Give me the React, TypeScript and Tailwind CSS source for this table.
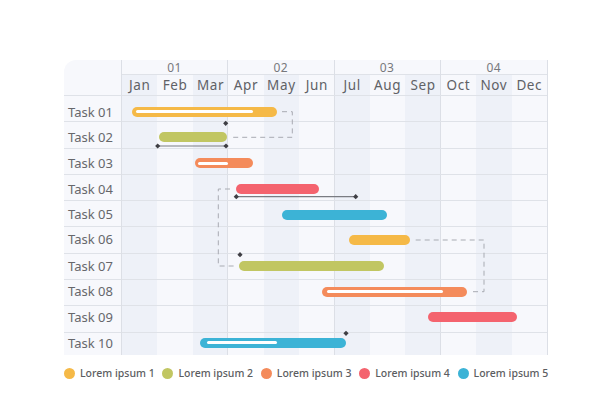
import React from 'react';

type Task = {
  name: string;
  left: number;
  width: number;
  color: string;
  inner?: { left: number; width: number };
};

// bar centre (px) measured from the top of the chart body
const centres = [15.7, 41, 67.3, 92.7, 118.7, 144, 170, 195.7, 221.3, 247];
const ROW = 26.3;

const tasks: Task[] = [
  { name: 'Task 01', left: 9.7, width: 145.6, color: 'bg-[#f5b947]', inner: { left: 4.3, width: 116.7 } },
  { name: 'Task 02', left: 36.7, width: 68, color: 'bg-[#c1c662]' },
  { name: 'Task 03', left: 72.7, width: 58.6, color: 'bg-[#f48b5b]', inner: { left: 3.3, width: 30 } },
  { name: 'Task 04', left: 113.7, width: 83.6, color: 'bg-[#f4636e]' },
  { name: 'Task 05', left: 159.7, width: 105.6, color: 'bg-[#3cb3d6]' },
  { name: 'Task 06', left: 227.3, width: 60.7, color: 'bg-[#f5b947]' },
  { name: 'Task 07', left: 117, width: 145.3, color: 'bg-[#c1c662]' },
  { name: 'Task 08', left: 199.7, width: 145, color: 'bg-[#f48b5b]', inner: { left: 5, width: 116.6 } },
  { name: 'Task 09', left: 306, width: 88.7, color: 'bg-[#f4636e]' },
  { name: 'Task 10', left: 78.3, width: 145.4, color: 'bg-[#3cb3d6]', inner: { left: 6.4, width: 70 } },
];

const quarters = ['01', '02', '03', '04'];
const months = ['Jan', 'Feb', 'Mar', 'Apr', 'May', 'Jun', 'Jul', 'Aug', 'Sep', 'Oct', 'Nov', 'Dec'];

const legend = [
  { label: 'Lorem ipsum 1', color: 'bg-[#f5b947]' },
  { label: 'Lorem ipsum 2', color: 'bg-[#c1c662]' },
  { label: 'Lorem ipsum 3', color: 'bg-[#f48b5b]' },
  { label: 'Lorem ipsum 4', color: 'bg-[#f4636e]' },
  { label: 'Lorem ipsum 5', color: 'bg-[#3cb3d6]' },
];

const rowTop = (i: number) => i * ROW;
const rowHeight = (i: number) => (i < 9 ? ROW : 22);

const Diamond = ({ x, y }: { x: number; y: number }) => (
  <path d={`M${x} ${y - 2.6}L${x + 2.6} ${y}L${x} ${y + 2.6}L${x - 2.6} ${y}Z`} fill="#3f3f44" />
);

const Links = () => (
  <svg className="pointer-events-none absolute inset-0" width="426" height="259" viewBox="0 0 426 259">
    <g fill="none" stroke="#a8abb2" strokeWidth="1" strokeDasharray="5 4">
      <path d="M160 15.7H170.3V41.3H109.7" />
      <path d="M108 93H96.3V170H114" />
      <path d="M293.7 144H362V195.7H349.7" />
    </g>
    <g stroke="#7a7c82" strokeWidth="1.2">
      <line x1="35.7" y1="50" x2="104" y2="50" />
      <line x1="114.3" y1="100.7" x2="233.7" y2="100.7" />
    </g>
    <Diamond x={103.7} y={27.3} />
    <Diamond x={35.7} y={50} />
    <Diamond x={104} y={50} />
    <Diamond x={114.3} y={100.7} />
    <Diamond x={233.7} y={100.7} />
    <Diamond x={118} y={158.7} />
    <Diamond x={224} y={237.3} />
  </svg>
);

export default function App() {
  return (
    <div className="h-[408px] w-[612px] bg-white pl-[64px] pt-[60px] font-['Noto_Sans',sans-serif] text-[#66676b]">
      <div className="flex w-[484px] overflow-hidden rounded-tl-[12px] bg-[#f7f8fc]">
        {/* task names */}
        <div className="w-[58px] shrink-0 border-r border-[#dcdfe6]">
          <div className="h-[36px] border-b border-[#dfe2e8]" />
          {tasks.map((t, i) => (
            <div
              key={t.name}
              className={`flex items-center pl-[4px] text-[13px] ${i < 9 ? 'h-[26.3px] border-b border-[#dfe2e8]' : 'h-[22px]'}`}
            >
              <span style={{ transform: `translateY(${centres[i] - rowTop(i) - rowHeight(i) / 2 + 1}px)` }}>
                {t.name}
              </span>
            </div>
          ))}
        </div>

        {/* timeline */}
        <div className="relative flex-1 border-r border-[#dcdfe6]">
          <div className="absolute inset-x-0 top-[15px] bottom-0 grid grid-cols-12">
            {months.map((m, i) => (
              <div
                key={m}
                className={`${i % 2 === 0 ? 'bg-[#eef1f8]' : ''} ${i % 3 === 2 && i < 11 ? 'border-r border-[#dcdfe6]' : ''}`}
              />
            ))}
          </div>

          <div className="relative">
            <div className="grid h-[15px] grid-cols-4 border-b border-[#dfe2e8] text-[12px] leading-[15px] text-[#77787c]">
              {quarters.map((q, i) => (
                <div key={q} className={`text-center tracking-[0.5px] ${i < 3 ? 'border-r border-[#dcdfe6]' : ''}`}>
                  {q}
                </div>
              ))}
            </div>
            <div className="grid h-[21px] grid-cols-12 border-b border-[#dfe2e8] text-[13.5px] leading-[21px] tracking-[0.6px] text-[#606166]">
              {months.map((m) => (
                <div key={m} className="text-center">
                  {m}
                </div>
              ))}
            </div>

            <div className="relative">
              {tasks.map((t, i) => (
                <div
                  key={t.name}
                  className={`relative ${i < 9 ? 'h-[26.3px] border-b border-[#dfe2e8]' : 'h-[22px]'}`}
                >
                  <div
                    className={`absolute h-[10px] rounded-full ${t.color}`}
                    style={{ left: t.left, width: t.width, top: centres[i] - rowTop(i) - 5 }}
                  >
                    {t.inner && (
                      <div
                        className="absolute top-[3.5px] h-[3px] rounded-full bg-white"
                        style={{ left: t.inner.left, width: t.inner.width }}
                      />
                    )}
                  </div>
                </div>
              ))}
              <Links />
            </div>
          </div>
        </div>
      </div>

      {/* legend */}
      <div className="mt-[11px] grid w-[492px] grid-cols-5 text-[10.5px] font-medium text-[#5c5d61]">
        {legend.map((l) => (
          <div key={l.label} className="flex items-center gap-[5px]">
            <span className={`h-[11px] w-[11px] shrink-0 rounded-full ${l.color}`} />
            <span>{l.label}</span>
          </div>
        ))}
      </div>
    </div>
  );
}
